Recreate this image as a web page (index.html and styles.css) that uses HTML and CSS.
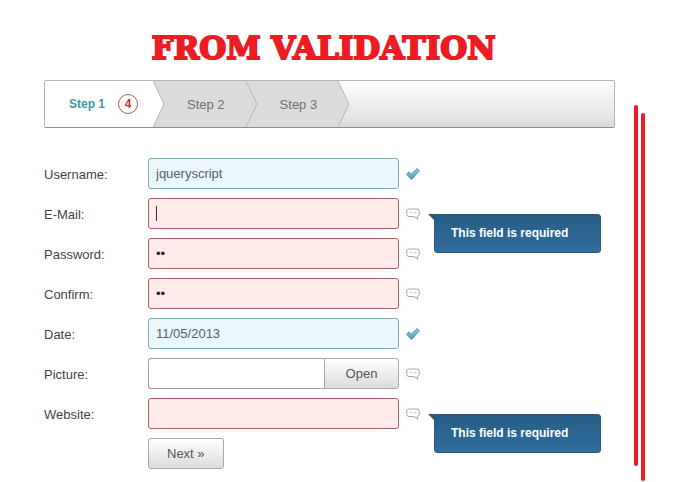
FILE: index.html
```html
<!DOCTYPE html>
<html lang="en">
<head>
    <meta charset="UTF-8">
    <meta name="viewport" content="width=device-width, initial-scale=1.0">
    <title>Form Validation</title>
    <link rel="stylesheet" href="styles.css">
</head>
<body>
    <svg class="sprite" aria-hidden="true">
        <defs>
            <linearGradient id="tick-fill" x1="0" y1="0" x2="0" y2="1">
                <stop offset="0" stop-color="#8fd0e2"/>
                <stop offset="1" stop-color="#4c9fbb"/>
            </linearGradient>
        </defs>
        <symbol id="tick" viewBox="0 0 14 12">
            <path d="M.6 6.2 3 3.8 5.3 6.2 11 .6l2.5 2.2L5.5 11.4z" fill="url(#tick-fill)" stroke="#3f8ba6" stroke-width=".9" stroke-linejoin="round"/>
        </symbol>
        <symbol id="bubble" viewBox="0 0 14 12">
            <path d="M3 1h8a2.3 2.3 0 0 1 2.3 2.3v2.9A2.3 2.3 0 0 1 11.2 8.500l.3 2.7L8 8.500H3A2.3 2.3 0 0 1 .7 6.200V3.300A2.3 2.3 0 0 1 3 1z" fill="#fff" stroke="#a6a6a6"/>
            <path d="M4 4.800h1.300M6.400 4.800h1.300M8.800 4.800h1.300" stroke="#aaa"/>
        </symbol>
    </svg>
    <div class="page">
        <main>
            <h1>FROM VALIDATION</h1>
            <ol class="steps">
                <li class="active">
                    <a href="#step1">Step 1</a><span class="count">4</span>
                    <svg class="arrow" viewBox="0 0 12 46"><path d="M0 0 11 23 0 46"/></svg>
                </li>
                <li>
                    <a href="#step2">Step 2</a>
                    <svg class="arrow" viewBox="0 0 12 46"><path d="M0 0 11 23 0 46"/></svg>
                </li>
                <li>
                    <a href="#step3">Step 3</a>
                    <svg class="arrow" viewBox="0 0 12 46"><path d="M0 0 11 23 0 46"/></svg>
                </li>
            </ol>
            <form id="step1">
                <div class="row valid">
                    <label for="username">Username:</label>
                    <input type="text" id="username" value="jqueryscript">
                    <svg class="icon"><use href="#tick"/></svg>
                </div>
                <div class="row error current">
                    <label for="email">E-Mail:</label>
                    <input type="text" id="email">
                    <svg class="icon"><use href="#bubble"/></svg>
                    <div class="tooltip" role="alert">This field is required</div>
                </div>
                <div class="row error">
                    <label for="password">Password:</label>
                    <input type="password" id="password" value="ab">
                    <svg class="icon"><use href="#bubble"/></svg>
                </div>
                <div class="row error">
                    <label for="confirm">Confirm:</label>
                    <input type="password" id="confirm" value="cd">
                    <svg class="icon"><use href="#bubble"/></svg>
                </div>
                <div class="row valid">
                    <label for="date">Date:</label>
                    <input type="text" id="date" value="11/05/2013">
                    <svg class="icon"><use href="#tick"/></svg>
                </div>
                <div class="row">
                    <label for="picture">Picture:</label>
                    <div class="file">
                        <input type="text" id="picture" readonly>
                        <button type="button">Open</button>
                    </div>
                    <svg class="icon"><use href="#bubble"/></svg>
                </div>
                <div class="row error">
                    <label for="website">Website:</label>
                    <input type="text" id="website">
                    <svg class="icon"><use href="#bubble"/></svg>
                    <div class="tooltip" role="alert">This field is required</div>
                </div>
                <div class="row actions">
                    <button type="button">Next »</button>
                </div>
            </form>
        </main>
        <div class="lines">
            <span></span>
            <span></span>
        </div>
    </div>
</body>
</html>
```

FILE: styles.css
```css
* { margin: 0; padding: 0; box-sizing: border-box; }
body {
    font-family: "Liberation Sans", Arial, sans-serif;
    font-size: 13px;
    color: #444;
    background: #fff;
}
.sprite { position: absolute; width: 0; height: 0; }
.page {
    display: flex;
    gap: 19px;
    padding: 0 35px 0 44px;
}
main {
    flex: 1;
    padding: 30px 0 12px;
}
h1 {
    padding-right: 12px;
    font-family: "DejaVu Serif", serif;
    font-size: 31px;
    line-height: 36px;
    font-weight: bold;
    text-align: center;
    color: #ed1c24;
    -webkit-text-stroke: 2px #ed1c24;
}

/* Step bar */
.steps {
    display: flex;
    height: 48px;
    margin: 14px 0 30px;
    border: 1px solid #b5b5b5;
    border-bottom-color: #8c8c8c;
    border-radius: 2px;
    background: linear-gradient(#fff, #dcdcdc);
    list-style: none;
}
.steps li {
    position: relative;
    display: flex;
    align-items: center;
    padding: 0 21px 0 34px;
    background: #dcdcdc;
}
.steps a { color: #707070; text-decoration: none; }
.steps .active {
    gap: 13px;
    padding: 0 15px 0 24px;
    background: #fff;
    z-index: 1;
}
.steps .active a {
    font-size: 12px;
    font-weight: bold;
    color: #3f98ab;
}
.count {
    width: 20px;
    height: 20px;
    border: 1px solid #b5564c;
    border-radius: 10px;
    font-size: 12px;
    line-height: 18px;
    font-weight: bold;
    text-align: center;
    color: #b8382e;
}
.arrow {
    position: absolute;
    top: 0;
    left: 100%;
    width: 12px;
    height: 46px;
    z-index: 1;
    fill: #dcdcdc;
    stroke: #b8b8b8;
}
.active .arrow { fill: #fff; }

/* Form */
form {
    display: flex;
    flex-direction: column;
    gap: 9px;
}
.row {
    position: relative;
    display: grid;
    grid-template-columns: 104px 251px 21px;
    align-items: center;
    height: 31px;
}
label { padding-top: 2px; }
input {
    width: 100%;
    height: 31px;
    padding: 0 7px;
    border: 1px solid #a0a0a0;
    border-radius: 3px;
    font: inherit;
    color: #53626b;
    background: #fff;
    outline: none;
}
.valid input { border-color: #7ba9b6; background: #ebf6fd; }
.error input { border-color: #a5615f; background: #ffebea; }
input[type="password"] { color: #222; }
/* text cursor of the field being edited */
.current input {
    background: linear-gradient(#333, #333) 7px center / 1px 15px no-repeat #ffebea;
}
button {
    height: 31px;
    border: 1px solid #a8a8a8;
    border-radius: 3px;
    font: inherit;
    color: #555;
    background: linear-gradient(#fff, #dcdcdc);
}
.file { display: flex; }
.file input {
    flex: 1;
    min-width: 0;
    border-right: 0;
    border-radius: 3px 0 0 3px;
}
.file button {
    width: 75px;
    border-radius: 0 3px 3px 0;
}
.icon {
    width: 14px;
    height: 12px;
    margin-left: 7px;
}
.actions button {
    grid-column: 2;
    justify-self: start;
    padding: 0 18px;
}
.tooltip {
    position: absolute;
    top: 16px;
    left: 390px;
    width: 167px;
    padding: 0 16px;
    border: 1px solid #2c5877;
    border-radius: 0 3px 3px 3px;
    font-size: 12px;
    line-height: 37px;
    font-weight: bold;
    color: #fff;
    background: linear-gradient(#275d86, #316d9c);
}
.tooltip::before {
    content: "";
    position: absolute;
    top: -1px;
    left: -7px;
    border-top: 6px solid #2c5877;
    border-left: 6px solid transparent;
}

/* Red side lines */
.lines {
    display: flex;
    gap: 3px;
    padding-top: 105px;
}
.lines span {
    width: 4px;
    margin-bottom: 15px;
    border-radius: 2px;
    background: #ed1c24;
}
.lines span + span { margin: 8px 0 0; }
```
